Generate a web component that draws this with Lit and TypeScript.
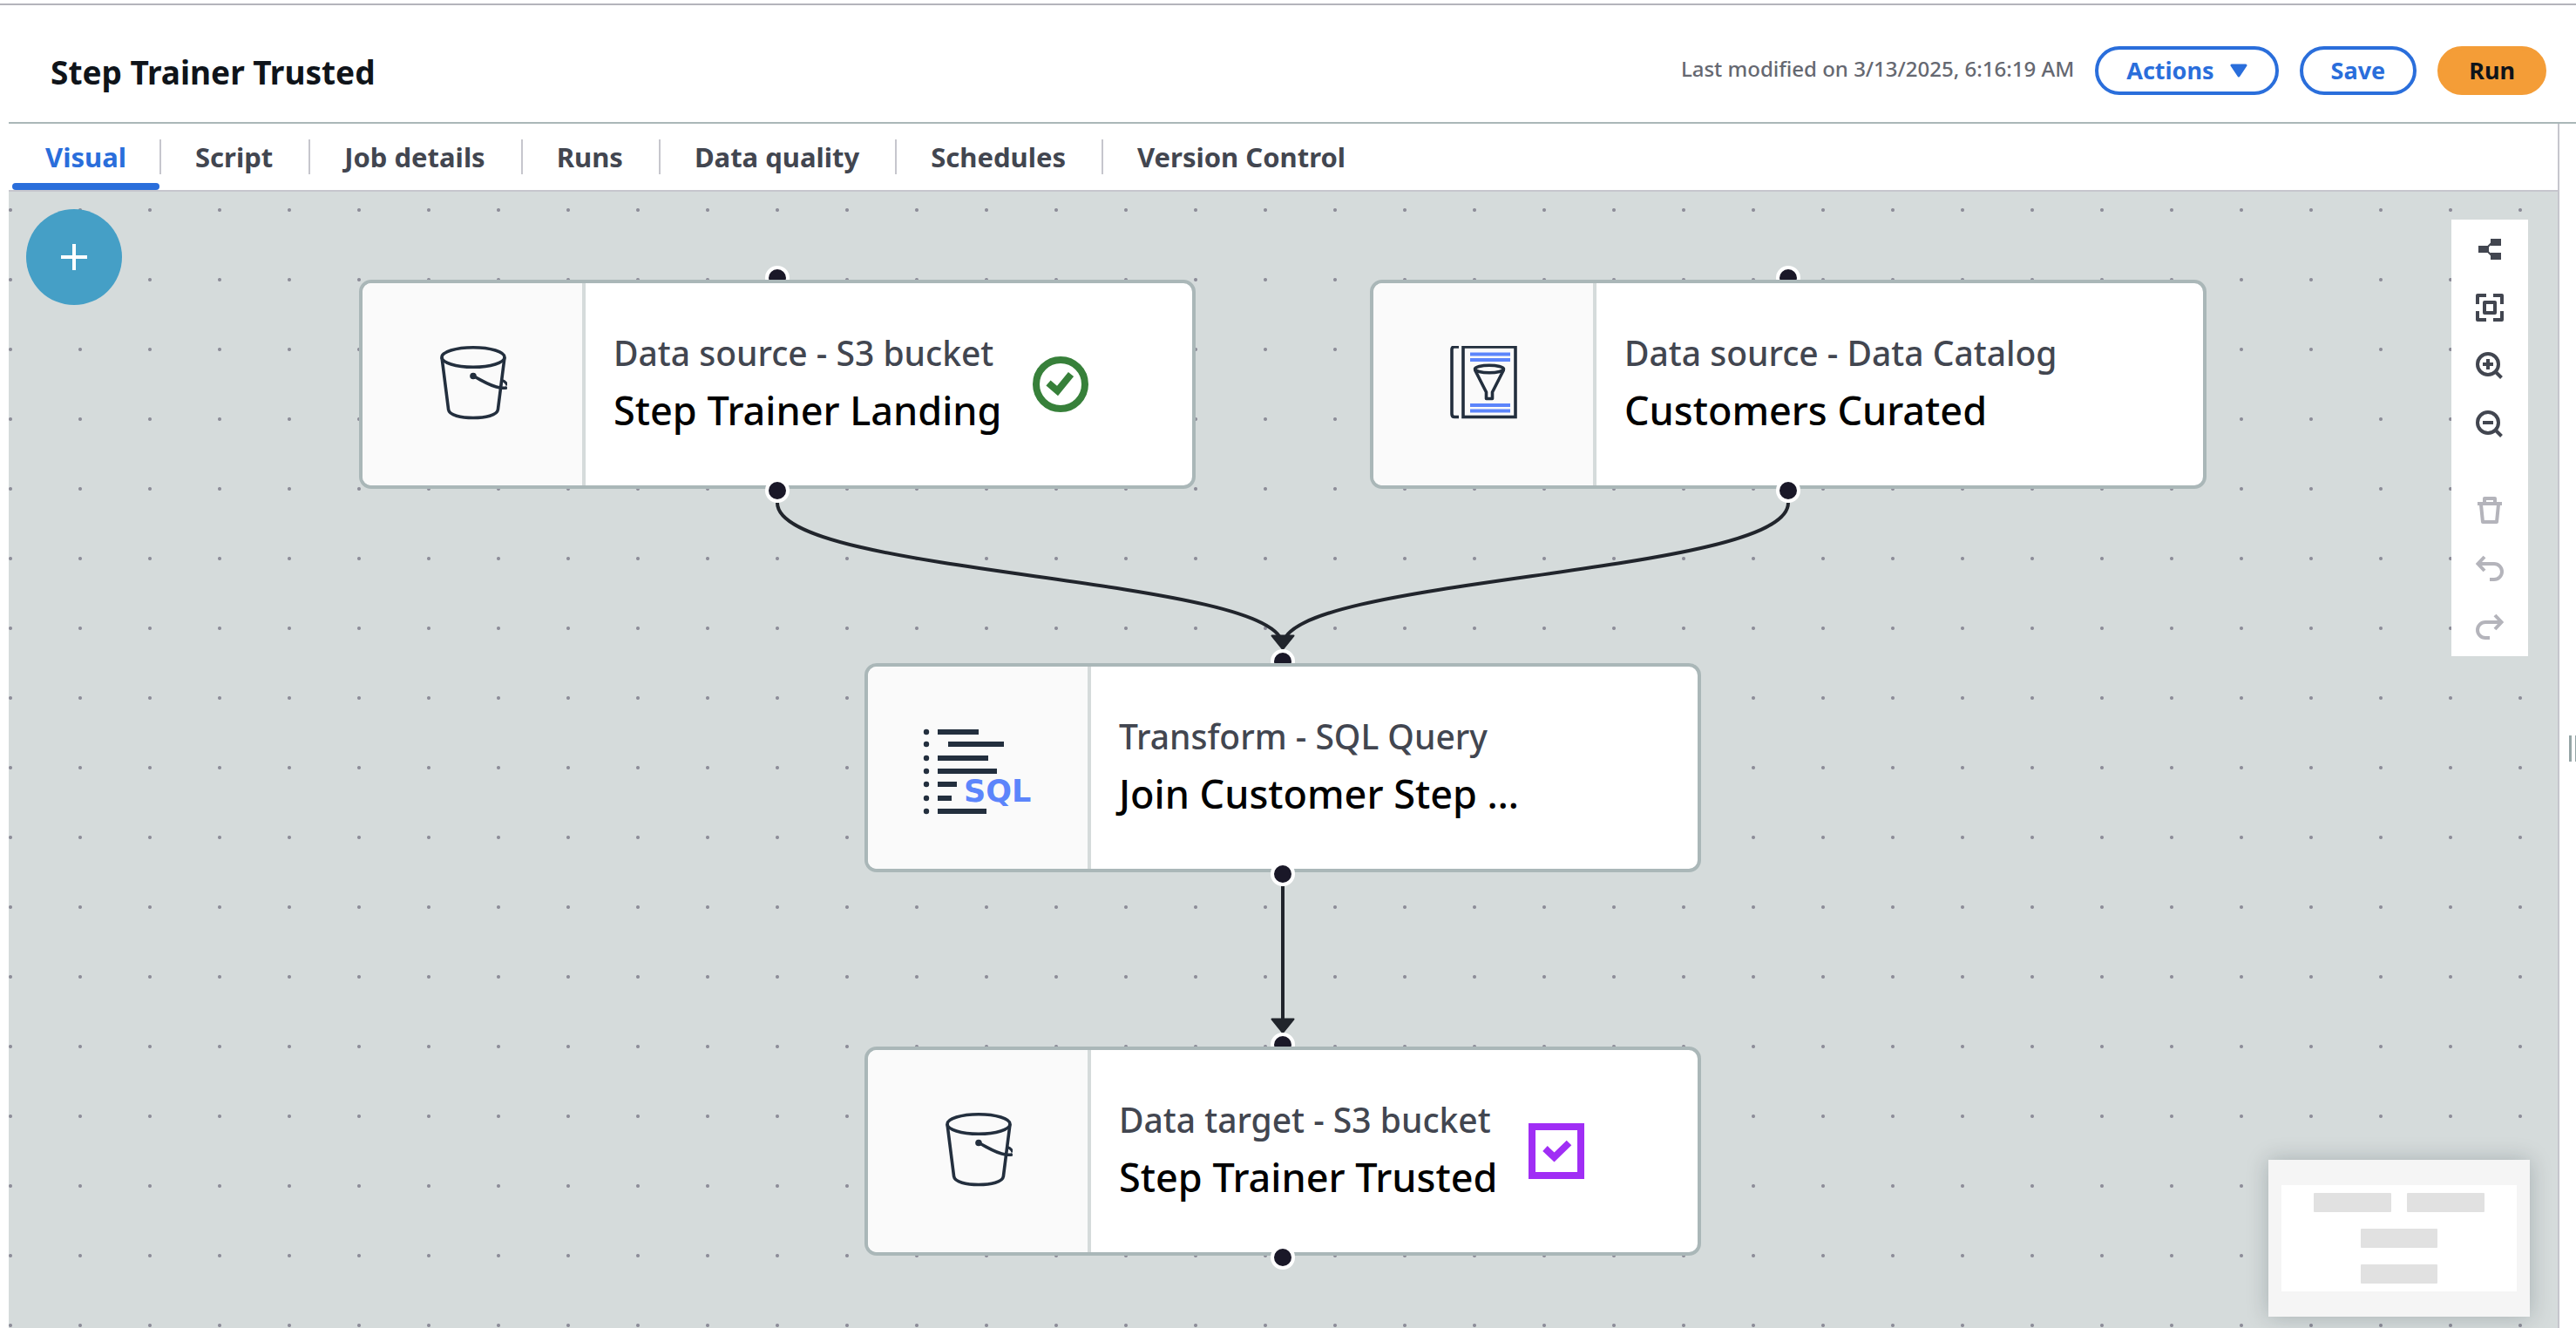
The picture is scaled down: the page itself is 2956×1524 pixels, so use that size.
import { LitElement, html, svg, css, TemplateResult } from "lit";
import { customElement, property, state } from "lit/decorators.js";
import { classMap } from "lit/directives/class-map.js";
import { styleMap } from "lit/directives/style-map.js";

type NodeKind = "bucket" | "catalog" | "sql";
type NodeStatus = "ok" | "selected" | "none";

interface JobNode {
  id: string;
  x: number;
  y: number;
  kind: NodeKind;
  type: string;
  name: string;
  status: NodeStatus;
}

const NODES: JobNode[] = [
  { id: "landing", x: 0, y: 0, kind: "bucket", type: "Data source - S3 bucket", name: "Step Trainer Landing", status: "ok" },
  { id: "customers", x: 1160, y: 0, kind: "catalog", type: "Data source - Data Catalog", name: "Customers Curated", status: "none" },
  { id: "join", x: 580, y: 440, kind: "sql", type: "Transform - SQL Query", name: "Join Customer Step …", status: "none" },
  { id: "trusted", x: 580, y: 880, kind: "bucket", type: "Data target - S3 bucket", name: "Step Trainer Trusted", status: "selected" },
];

const TABS = ["Visual", "Script", "Job details", "Runs", "Data quality", "Schedules", "Version Control"];

const nodeIcons: Record<NodeKind, TemplateResult> = {
  bucket: html`<svg width="80" height="88" viewBox="0 0 80 88" fill="none" stroke="#232f3e" stroke-width="3.6" aria-hidden="true">
    <ellipse cx="41" cy="13" rx="36" ry="11.2" />
    <path d="M5 13 L12.6 73 C13.5 79.500 27 82.500 41 82.500 S68.500 79.500 69.400 73 L77 13" />
    <circle cx="41" cy="34.500" r="3.800" fill="#232f3e" stroke="none" />
    <path d="M41 34.500 C52 40 61 46.500 72 48 C75.500 48.500 78.500 48.500 80 47.500" />
    <path d="M74 39.500 C77 40.500 79.500 43 80 45.500" stroke-width="3" />
  </svg>`,
  catalog: html`<svg width="80" height="88" viewBox="0 0 80 88" fill="none" stroke="#232f3e" stroke-width="3.6" aria-hidden="true">
    <path d="M12 1 H7 Q4 1 4 4 V78 Q4 81.500 7 81.500 H12" />
    <rect x="17" y="1" width="60" height="80.500" />
    <path d="M25 9.500 H71 M25 16 H71 M25 68 H71 M25 74.500 H71" stroke="#5c85fb" stroke-width="4" />
    <ellipse cx="47" cy="26.500" rx="16.500" ry="4.200" />
    <path d="M30.500 27.500 L43.500 53 V60.500 H50.500 V53 L63.500 27.500" stroke-linejoin="round" />
  </svg>`,
  sql: html`<svg width="150" height="122" viewBox="0 0 150 122" fill="#232f3e" role="img" aria-label="SQL">
    ${[
      [20, 29, 76],
      [34, 41, 105],
      [50, 29, 87],
      [65, 29, 97],
      [80, 29, 51],
      [96, 29, 45],
      [111, 29, 85],
    ].map(
      ([y, from, to]) => svg`<circle cx="16" cy=${y} r="3.200" /><rect x=${from} y=${y - 3} width=${to - from} height="6" />`
    )}
    <text x="59" y="100" font-family="DejaVu Sans, sans-serif" font-weight="700" font-size="35" fill="#5c85fb">SQL</text>
  </svg>`,
};

const statusIcons: Record<NodeStatus, TemplateResult | null> = {
  ok: html`<svg width="64" height="64" viewBox="0 0 64 64" fill="none" stroke="#37803a" stroke-width="8" role="img" aria-label="Ready">
    <circle cx="32" cy="32" r="28" />
    <path d="M18 30.500 L28.500 39.500 L44 20.500" stroke-width="8" />
  </svg>`,
  selected: html`<svg width="64" height="64" viewBox="0 0 64 64" fill="none" stroke="#a02ef5" stroke-width="8" role="img" aria-label="Selected">
    <rect x="4" y="4" width="56" height="56" />
    <path d="M19 29 L29.500 39 L46.500 22.500" stroke-width="8" />
  </svg>`,
  none: null,
};

interface Tool {
  label: string;
  icon: TemplateResult;
  disabled?: boolean;
}

const TOOLS: Tool[] = [
  {
    label: "Arrange",
    icon: svg`<path d="M3 12h12v8H3zM17 4h12v8H17zM17 20h12v8H17z" fill="currentColor" stroke="none" /><path d="M13 14l6-6M13 18l6 6" stroke-width="2" />`,
  },
  {
    label: "Fit to screen",
    icon: svg`<path d="M2 12V2h10M20 2h10v10M30 20v10H20M12 30H2V20" stroke-linejoin="round" /><rect x="10" y="10" width="12" height="12" stroke-linejoin="round" />`,
  },
  { label: "Zoom in", icon: svg`<circle cx="14" cy="14" r="12" /><path d="M22.500 22.500l7 7M14 8v12M8 14h12" />` },
  { label: "Zoom out", icon: svg`<circle cx="14" cy="14" r="12" /><path d="M22.500 22.500l7 7M8 14h12" />` },
  {
    label: "Delete",
    disabled: true,
    icon: svg`<path d="M2 8h28M10 8V2h12v6M6 9l2 20h16l2-20" stroke-linejoin="round" />`,
  },
  { label: "Undo", disabled: true, icon: svg`<path d="M3 10h18a9 9 0 0 1 0 18h-5M10 2L2.500 10l7.500 8" />` },
  { label: "Redo", disabled: true, icon: svg`<path d="M29 10H11a9 9 0 0 0 0 18h5M22 2l7.500 8l-7.500 8" />` },
];

@customElement("job-node")
class JobNodeCard extends LitElement {
  @property({ attribute: false }) node!: JobNode;

  static styles = css`
    :host {
      display: block;
      position: relative;
      width: 960px;
    }
    .card {
      position: relative;
      display: flex;
      box-sizing: border-box;
      height: 240px;
      border: 4px solid #aab7b8;
      border-radius: 14px;
      background: #fff;
      overflow: hidden;
    }
    .icon {
      display: flex;
      flex: none;
      align-items: center;
      justify-content: center;
      width: 252px;
      border-right: 4px solid #d5dbdb;
      background: #fafafa;
    }
    .body {
      display: flex;
      align-items: center;
      gap: 36px;
      padding-left: 32px;
    }
    .type {
      margin: 0;
      color: #424650;
      font-size: 39px;
      font-weight: 500;
      line-height: 60px;
    }
    .name {
      margin: 0;
      color: #000;
      font-size: 45px;
      font-weight: 500;
      line-height: 72px;
    }
    svg {
      display: block;
      flex: none;
    }
    .handle {
      position: absolute;
      left: 50%;
      box-sizing: border-box;
      width: 28px;
      height: 28px;
      margin-left: -14px;
      border: 4px solid #fff;
      border-radius: 50%;
      background: #1a1828;
    }
    .input {
      top: -16px;
    }
    .output {
      bottom: -16px;
    }
  `;

  render() {
    const { kind, type, name, status } = this.node;
    return html`
      <span class="handle input"></span>
      <article class="card">
        <div class="icon">${nodeIcons[kind]}</div>
        <div class="body">
          <div>
            <p class="type">${type}</p>
            <h2 class="name">${name}</h2>
          </div>
          ${statusIcons[status]}
        </div>
      </article>
      <span class="handle output"></span>
    `;
  }
}

@customElement("app-root")
class AppRoot extends LitElement {
  @state() private activeTab = "Visual";

  static styles = css`
    :host {
      display: flex;
      flex-direction: column;
      box-sizing: border-box;
      min-height: 100vh;
      padding-top: 4px;
      background: #fff;
      font-family: "Noto Sans", "Open Sans", sans-serif;
    }
    button {
      margin: 0;
      font-family: inherit;
      cursor: pointer;
    }
    .header {
      display: flex;
      align-items: flex-start;
      gap: 24px;
      height: 134px;
      box-sizing: border-box;
      padding: 47px 34px 0 58px;
    }
    .top-line {
      height: 2px;
      background: #b4b4bb;
    }
    .title {
      flex: 1;
      margin: 0;
      color: #0f141a;
      font-size: 37px;
      font-weight: 700;
      line-height: 60px;
    }
    .modified {
      color: #656871;
      font-size: 24px;
      font-weight: 500;
      line-height: 52px;
    }
    .btn {
      display: flex;
      align-items: center;
      gap: 18px;
      box-sizing: border-box;
      height: 56px;
      padding: 0 32px;
      border: 4px solid #2a6edb;
      border-radius: 28px;
      background: #fff;
      color: #2a6edb;
      font-size: 27px;
      font-weight: 700;
      line-height: 40px;
    }
    .primary {
      border-color: #f49d37;
      background: #f49d37;
      color: #0f141a;
    }
    .main {
      display: flex;
      flex: 1;
      margin-left: 10px;
      border-top: 2px solid #aab7b8;
    }
    .panel {
      display: flex;
      flex: 1;
      flex-direction: column;
      min-width: 0;
      border-right: 2px solid #c6c6cd;
    }
    .tabs {
      display: flex;
      align-items: stretch;
      height: 76px;
      padding-left: 4px;
      border-bottom: 2px solid #c6c6cd;
    }
    .tab {
      position: relative;
      display: flex;
      align-items: center;
      padding: 0 41px;
      border: 0;
      background: none;
      color: #424650;
      font-size: 31px;
      font-weight: 700;
      line-height: 40px;
    }
    .tab:first-child {
      padding: 0 38px;
    }
    .tab + .tab::before {
      content: "";
      position: absolute;
      left: 0;
      top: 18px;
      width: 2px;
      height: 40px;
      background: #c6c6cd;
    }
    .tab.active {
      color: #2a6edb;
    }
    .tab.active::after {
      content: "";
      position: absolute;
      left: 0;
      right: 0;
      bottom: 0;
      height: 8px;
      border-radius: 4px;
      background: #2a6edb;
    }
    .canvas {
      position: relative;
      flex: 1;
      box-sizing: border-box;
      padding: 101px 0 80px;
      background-color: #d5dbdb;
      background-image: radial-gradient(circle at 2px 21px, #8d8d99 1.5px, rgba(141, 141, 153, 0) 2.5px);
      background-size: 80px 80px;
      overflow: hidden;
    }
    .stage {
      position: relative;
      width: 2121px;
      height: 1120px;
      margin: 0 auto;
    }
    .edges {
      position: absolute;
      left: 0;
      top: 0;
      overflow: visible;
    }
    .placed {
      position: absolute;
    }
    .add {
      position: absolute;
      left: 20px;
      top: 20px;
      display: flex;
      align-items: center;
      justify-content: center;
      width: 110px;
      height: 110px;
      padding: 0;
      border: 0;
      border-radius: 50%;
      background: #459fc6;
      color: #fff;
    }
    .tools {
      position: absolute;
      right: 34px;
      top: 32px;
      display: flex;
      flex-direction: column;
      width: 88px;
      background: #fff;
    }
    .tool {
      display: flex;
      align-items: center;
      justify-content: center;
      height: 67px;
      padding: 0;
      border: 0;
      background: none;
      color: #424650;
    }
    .tool:disabled {
      color: #b4b4bb;
      cursor: default;
    }
    .tool:not(:disabled) + .tool:disabled {
      margin-top: 32px;
    }
    .minimap {
      position: absolute;
      right: 32px;
      bottom: 13px;
      width: 300px;
      height: 180px;
      background: #f5f5f5;
      box-shadow: 0 0 24px rgba(0, 28, 36, 0.22);
    }
    .gutter {
      display: flex;
      flex: none;
      align-items: center;
      justify-content: flex-end;
      box-sizing: border-box;
      width: 19px;
      padding: 52px 0 0;
      border: 0;
      background: #fff;
      cursor: col-resize;
    }
    .grip {
      width: 4px;
      height: 30px;
      border: solid #95a5a6;
      border-width: 0 1px 0 3px;
    }
  `;

  private renderEdges() {
    return html`<svg class="edges" width="2120" height="1120" viewBox="0 0 2120 1120" fill="none" stroke="#21252c" stroke-width="4" aria-hidden="true">
      <path d="M480 256 C480 340 1060 340 1060 420" />
      <path d="M1640 256 C1640 340 1060 340 1060 420" />
      <path d="M1060 696 V854" />
      <g fill="#21252c" stroke-width="2" stroke-linejoin="round">
        <path d="M1047.500 408.500 H1072.500 L1060 424 Z" />
        <path d="M1047.500 848.500 H1072.500 L1060 864 Z" />
      </g>
    </svg>`;
  }

  render() {
    return html`
      <div class="top-line"></div>
      <header class="header">
        <h1 class="title">Step Trainer Trusted</h1>
        <span class="modified">Last modified on 3/13/2025, 6:16:19 AM</span>
        <button class="btn" type="button" aria-haspopup="menu">
          Actions
          <svg width="20" height="16" viewBox="0 0 20 16" aria-hidden="true">
            <path d="M2 2 H18 L10 14 Z" fill="currentColor" stroke="currentColor" stroke-width="3" stroke-linejoin="round" />
          </svg>
        </button>
        <button class="btn" type="button">Save</button>
        <button class="btn primary" type="button">Run</button>
      </header>
      <main class="main">
        <section class="panel">
          <nav class="tabs" role="tablist">
            ${TABS.map(
              (tab) => html`<button
                type="button"
                role="tab"
                aria-selected=${tab === this.activeTab}
                class=${classMap({ tab: true, active: tab === this.activeTab })}
                @click=${() => (this.activeTab = tab)}
              >${tab}</button>`
            )}
          </nav>
          <div class="canvas">
            <div class="stage">
              ${this.renderEdges()}
              ${NODES.map(
                (node) => html`<job-node
                  class="placed"
                  style=${styleMap({ left: `${node.x}px`, top: `${node.y}px` })}
                  .node=${node}
                ></job-node>`
              )}
            </div>
            <button class="add" type="button" aria-label="Add node">
              <svg width="30" height="30" viewBox="0 0 30 30" stroke="currentColor" stroke-width="4" aria-hidden="true">
                <path d="M15 0V30M0 15H30" />
              </svg>
            </button>
            <div class="tools" role="toolbar" aria-label="Canvas tools">
              ${TOOLS.map(
                (tool) => html`<button class="tool" type="button" aria-label=${tool.label} ?disabled=${tool.disabled ?? false}>
                  <svg width="32" height="32" viewBox="0 0 32 32" fill="none" stroke="currentColor" stroke-width="4" aria-hidden="true">
                    ${tool.icon}
                  </svg>
                </button>`
              )}
            </div>
            <svg class="minimap" viewBox="0 0 300 180" fill="#e1e1e1" aria-hidden="true">
              <rect x="15" y="29" width="270" height="122" fill="#fff" />
              <rect x="52" y="38" width="89" height="22" rx="1" />
              <rect x="159" y="38" width="89" height="22" rx="1" />
              <rect x="106" y="79" width="88" height="22" rx="1" />
              <rect x="106" y="120" width="88" height="22" rx="1" />
            </svg>
          </div>
        </section>
        <button class="gutter" type="button" aria-label="Resize panel"><span class="grip"></span></button>
      </main>
    `;
  }
}
